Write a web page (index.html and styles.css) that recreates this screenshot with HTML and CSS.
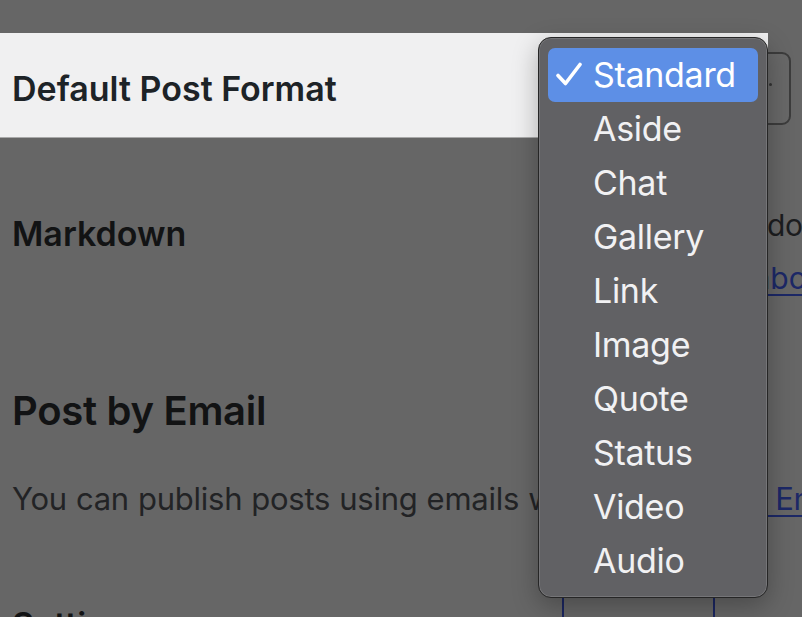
FILE: index.html
```html
<!DOCTYPE html>
<html lang="en">
<head>
<meta charset="utf-8">
<title>Writing Settings</title>
<link rel="stylesheet" href="styles.css">
</head>
<body>
<main class="page">
  <div class="row row-active">
    <div class="label">Default Post Format</div>
    <div class="select-box"><span class="chev"></span></div>
  </div>
  <div class="row row-md">
    <div class="label md-label">Markdown</div>
    <div class="desc">
      <div class="desc-line desc-first">Write in Markdown syntax</div>
      <div class="desc-line">Learn more <a href="#" class="link">about Markdown</a></div>
    </div>
  </div>
  <h2 class="heading">Post by Email</h2>
  <p class="para">You can publish posts using emails with this <a href="#" class="link">Post by Email</a> feature.</p>
  <div class="row row-settings">
    <div class="label set-label">Settings</div>
    <div class="button"></div>
  </div>
</main>

<div class="menu" role="listbox">
  <div class="item selected">
    <svg class="check" width="28" height="26" viewBox="0 0 28 26"><path d="M3 13.5 L10.5 21.5 L25 2.5" fill="none" stroke="#fff" stroke-width="3.6" stroke-linecap="round" stroke-linejoin="round"/></svg>
    <span>Standard</span>
  </div>
  <div class="item"><span>Aside</span></div>
  <div class="item"><span>Chat</span></div>
  <div class="item"><span>Gallery</span></div>
  <div class="item"><span>Link</span></div>
  <div class="item"><span>Image</span></div>
  <div class="item"><span>Quote</span></div>
  <div class="item"><span>Status</span></div>
  <div class="item"><span>Video</span></div>
  <div class="item"><span>Audio</span></div>
</div>
</body>
</html>
```

FILE: styles.css
```css
html, body {
  margin: 0;
  padding: 0;
  background: #666666;
  overflow: hidden;
}
body {
  width: 802px;
  height: 617px;
  font-family: Inter, "Noto Sans", "Liberation Sans", sans-serif;
  position: relative;
}
.page {
  padding-top: 33px;
}
.row {
  display: flex;
}
.row-active {
  width: 768px;
  height: 97px;
  padding-top: 7px;
  background: #f0f0f1;
  border-bottom: 1px solid #a9a9a9;
  align-items: center;
}
.label {
  padding-left: 12px;
  font-size: 34px;
  line-height: 41px;
  font-weight: 600;
  color: #1d2327;
  flex: 0 0 auto;
}
.row-active .label {
  flex: 1 1 auto;
}
.select-box {
  width: 176px;
  height: 69px;
  border: 2px solid #3c3c3c;
  border-radius: 9px;
  margin-right: -23px;
  position: relative;
  background: #686868;
}
.chev {
  position: absolute;
  left: 156px;
  top: 29px;
  width: 3px;
  height: 3px;
  background: #333;
  border-radius: 50%;
}
.row-md {
  padding-top: 61px;
  align-items: flex-start;
}
.md-label {
  margin-top: 14px;
  width: 571px;
  color: #121314;
}
.desc {
  font-size: 30px;
  line-height: 53px;
  color: #1c1d1f;
  white-space: nowrap;
}
.desc-first {
  letter-spacing: -0.3px;
}
.link {
  color: #1c2866;
  text-decoration: underline;
  text-decoration-thickness: 2px;
  text-underline-offset: 5px;
}
.heading {
  margin: 80px 0 0;
  padding-left: 12px;
  font-size: 40px;
  line-height: 51px;
  font-weight: 600;
  color: #121314;
  letter-spacing: -0.3px;
}
.para {
  margin: 42px 0 0;
  padding-left: 12px;
  font-size: 31px;
  line-height: 41px;
  color: #222325;
  white-space: nowrap;
  letter-spacing: -0.25px;
  word-spacing: 0.6px;
}
.row-settings {
  margin-top: 60px;
  align-items: flex-start;
}
.set-label {
  margin-top: 25px;
  width: 550px;
  color: #121314;
}
.button {
  width: 149px;
  height: 60px;
  border: 2px solid #1b2660;
  border-radius: 6px;
}
.menu {
  position: absolute;
  left: 538px;
  top: 37px;
  width: 210px;
  padding: 10px 9px 9px;
  background: #616164;
  border: 1px solid #262626;
  border-radius: 13px;
  box-shadow: inset 0 0 0 1px rgba(255,255,255,0.13), 0 8px 26px rgba(0,0,0,0.28);
}
.item {
  height: 54px;
  line-height: 54px;
  font-size: 34px;
  color: #f1f1f3;
  padding-left: 45px;
  position: relative;
  border-radius: 7px;
  letter-spacing: -0.3px;
}
.item.selected {
  background: #5d8fe6;
  color: #ffffff;
}
.check {
  position: absolute;
  left: 7px;
  top: 14px;
}
```
